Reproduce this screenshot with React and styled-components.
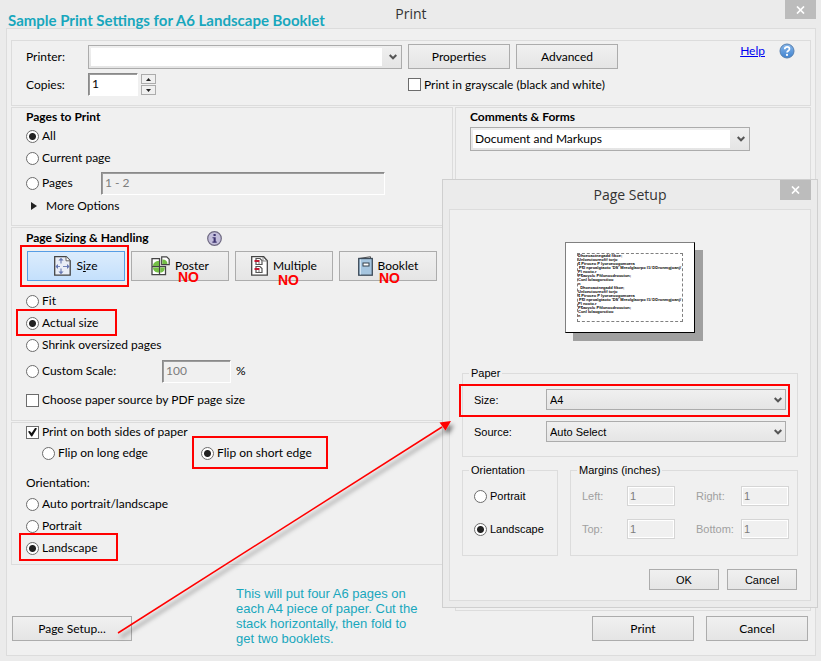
import React, { useId } from "react";
import styled, { createGlobalStyle, css } from "styled-components";

const RED = "#ff0000";
const LINE = "#dcdcdc";
const TEAL = "#18a7bd";
const UI = 'Lato, "Open Sans", sans-serif';
const DISPLAY = '"Open Sans", "Noto Sans", sans-serif';
const SANS = '"Liberation Sans", Arial, sans-serif';

const GlobalStyle = createGlobalStyle`
  *, *::before, *::after { box-sizing: border-box; }
  body { margin: 0; background: #ebebeb; color: #000; font: 12px/16px ${UI}; }
  button, input, select { font: inherit; color: inherit; margin: 0; }
`;

/* ---------- window chrome ---------- */
const PrintWindow = styled.div`
  position: relative;
  display: flex;
  flex-direction: column;
  min-height: 100vh;
  padding: 0 5px 5px 6px;
`;
const TitleBar = styled.header`
  display: grid;
  grid-template-columns: 31px 1fr 31px;
  height: ${(p) => p.$height}px;
  color: #333;
`;
const WindowTitle = styled.h1`
  grid-column: 2;
  margin: 0;
  font-family: ${DISPLAY};
  font-size: 14px;
  font-weight: 400;
  line-height: ${(p) => p.$line}px;
  text-align: center;
`;
const CloseButton = styled.button`
  display: grid;
  place-items: center;
  width: 31px;
  height: ${(p) => p.$height || 19}px;
  padding: 0;
  border: 0;
  background: #bcbcbc;
`;
const Client = styled.main`
  display: flex;
  flex: 1;
  flex-direction: column;
  padding: 11px 4px 14px;
  border: 1px solid ${LINE};
  background: #f0f0f0;
`;
const Panel = styled.section`
  padding: ${(p) => p.$pad || "0 14px"};
  border: 1px solid ${LINE};
`;
const Columns = styled.div`
  display: grid;
  flex: 1;
  grid-template-columns: minmax(0, 442fr) minmax(0, 356fr);
  gap: 2px;
  margin-top: 1px;
`;
const LeftColumn = styled.div`
  display: flex;
  flex-direction: column;
  gap: 1px;
`;
const CommentsPanel = styled(Panel)`
  display: flex;
  flex-direction: column;
  gap: 2px;
`;
const Footer = styled.footer`
  display: flex;
  gap: 12px;
  margin-top: 5px;
  padding: 0 3px 0 1px;
`;
const Spacer = styled.span`
  flex: 1;
`;

/* ---------- controls ---------- */
const PushButton = styled.button`
  width: ${(p) => p.$width}px;
  height: ${(p) => p.$height || 25}px;
  padding: 0;
  border: 1px solid #acacac;
  background: linear-gradient(#f0f0f0, #e5e5e5);
  text-align: center;
`;
const Heading = styled.h2`
  display: flex;
  align-items: center;
  gap: 58px;
  margin: 0;
  height: ${(p) => p.$height || 17}px;
  font-size: 12px;
  font-weight: 700;
`;
const Row = styled.div`
  display: flex;
  align-items: center;
  height: ${(p) => p.$height || 22}px;
  padding-left: ${(p) => p.$indent || 0}px;
`;
const ChoiceLabel = styled.label`
  position: relative;
  display: inline-flex;
  align-items: center;
  gap: 3px;
  height: 22px;
  white-space: nowrap;
`;
const Radio = styled.input.attrs({ type: "radio" })`
  appearance: none;
  flex: none;
  width: 13px;
  height: 13px;
  border: 1px solid #6c6c6c;
  border-radius: 50%;
  background: #fff;
  &:checked {
    background: radial-gradient(circle, #222 3px, #fff 4px);
  }
`;
const Check = styled.input.attrs({ type: "checkbox" })`
  appearance: none;
  display: grid;
  place-items: center;
  flex: none;
  width: 13px;
  height: 13px;
  border: 1px solid #6c6c6c;
  background: #fff;
  &:checked::before {
    content: "";
    width: 9px;
    height: 9px;
    background: #111;
    clip-path: polygon(0 45%, 20% 38%, 40% 62%, 80% 4%, 100% 12%, 46% 100%, 36% 100%);
  }
`;
const mark = css`
  &::after {
    content: "";
    position: absolute;
    inset: ${(p) => p.$mark};
    border: 2px solid ${RED};
    pointer-events: none;
  }
`;
const MarkedLabel = styled(ChoiceLabel)`
  ${mark}
`;
const SunkenInput = styled.input`
  width: ${(p) => p.$width};
  height: 23px;
  padding: 0 3px 2px;
  border: 1px solid;
  border-color: #8a8a8a #fff #fff #8a8a8a;
  box-shadow: inset 1px 1px 0 #9c9c9c;
  background: ${(p) => (p.disabled ? "#f0f0f0" : "#fff")};
  color: ${(p) => (p.disabled ? "#7d7d7d" : "#000")};
`;
const ComboFrame = styled.span`
  display: flex;
  align-items: center;
  width: ${(p) => p.$width || "100%"};
  height: 24px;
  padding: 2px;
  border: 1px solid #acacac;
  background: linear-gradient(#f0f0f0, #e5e5e5);
`;
const ComboSelect = styled.select`
  appearance: none;
  flex: 1;
  min-width: 0;
  height: 18px;
  padding: 0 2px;
  border: 0;
  background: #fff;
`;
const ChevronSlot = styled.span`
  display: flex;
  justify-content: flex-end;
  width: 17px;
  padding-right: 2px;
`;
const TextLink = styled.a`
  color: #0000f0;
`;

/* ---------- printer panel ---------- */
const PrinterGrid = styled.div`
  display: grid;
  grid-template-columns: 56px minmax(0, 314px) 102px 102px 1fr;
  align-items: center;
  gap: 4px 6px;
`;
const HelpGroup = styled.span`
  display: flex;
  justify-content: flex-end;
  align-items: center;
  gap: 14px;
  height: 25px;
  padding: 0 1px 11px 0;
`;
const Copies = styled.span`
  display: flex;
  align-items: center;
  gap: 3px;
`;
const Spinner = styled.span`
  display: grid;
  gap: 1px;
`;
const SpinButton = styled.button`
  display: grid;
  place-items: center;
  width: 15px;
  height: 10px;
  padding: 0;
  border: 1px solid #acacac;
  background: #f0f0f0;
`;
const GrayscaleCell = styled.span`
  grid-column: span 3;
`;

/* ---------- page sizing ---------- */
const ModeBar = styled.div`
  display: grid;
  grid-template-columns: repeat(4, minmax(0, 98px));
  gap: 6px;
  padding: 3px 0 9px 1px;
`;
const ModeButton = styled.button`
  position: relative;
  display: flex;
  align-items: center;
  justify-content: center;
  gap: 5px;
  height: 30px;
  padding: 0;
  border: 1px solid ${(p) => (p.$active ? "#569de5" : "#acacac")};
  background: ${(p) => (p.$active ? "linear-gradient(#dcecfc, #c4e0fc)" : "linear-gradient(#f0f0f0, #e5e5e5)")};
  ${(p) => p.$mark && mark}
`;
const No = styled.strong`
  position: absolute;
  top: ${(p) => p.$top}px;
  left: ${(p) => p.$left}px;
  color: ${RED};
  font: 700 14px/16px ${SANS};
`;
const MoreOptions = styled.button`
  display: flex;
  align-items: center;
  gap: 9px;
  height: 18px;
  padding: 0 0 0 5px;
  border: 0;
  background: none;
`;
const RowLabel = styled.span`
  width: ${(p) => p.$width}px;
`;
const Unit = styled.span`
  margin-left: 5px;
`;

/* ---------- page setup dialog ---------- */
const Dialog = styled.div`
  position: absolute;
  top: 179px;
  left: 442px;
  right: 3px;
  padding: 0 6px 6px;
  border: 1px solid #cfcfcf;
  background: #ebebeb;
`;
const DialogBody = styled.div`
  padding: 32px 12px 10px;
  border: 1px solid ${LINE};
  background: #f0f0f0;
  font-family: ${SANS};
  font-size: 11px;
`;
const Preview = styled.div`
  width: 130px;
  height: 91px;
  margin: 0 auto 32px 103px;
  padding: 10px 11px;
  border: 1px solid #000;
  border-top-color: #808080;
  border-left-color: #808080;
  background: #fff;
  box-shadow: 8px 8px 0 #a0a0a0;
`;
const PreviewText = styled.pre`
  height: 69px;
  margin: 0;
  border: 1px dashed #808080;
  font: 700 4px/4px ${SANS};
`;
const Group = styled.fieldset`
  min-width: 0;
  margin: 0;
  padding: ${(p) => p.$pad};
  border: 1px solid ${LINE};
`;
const Legend = styled.legend`
  margin-left: -5px;
  padding: 0 2px;
  line-height: 16px;
`;
const Groups = styled.div`
  display: grid;
  grid-template-columns: 96px 1fr;
  gap: 12px;
  margin-top: 5px;
`;
const PaperRow = styled.div`
  position: relative;
  display: grid;
  grid-template-columns: 72px 1fr;
  align-items: center;
  height: 21px;
  margin-bottom: 11px;
  ${(p) => p.$mark && mark}
`;
const FlatCombo = styled.span`
  display: grid;
  grid-template-columns: 1fr 16px;
  align-items: center;
`;
const FlatSelect = styled.select`
  appearance: none;
  grid-area: 1 / 1 / 2 / 3;
  height: 21px;
  padding: 0 3px;
  border: 1px solid #acacac;
  background: linear-gradient(#f0f0f0, #e5e5e5);
`;
const FlatArrow = styled.span`
  display: grid;
  grid-area: 1 / 2;
  place-items: center;
  pointer-events: none;
`;
const MarginGrid = styled.div`
  display: grid;
  grid-template-columns: 45px 48px 66px 48px;
  row-gap: 13px;
  align-items: center;
  color: #a0a0a0;
  & > label:nth-of-type(even) {
    padding-left: 21px;
  }
`;
const MarginInput = styled.input`
  width: 100%;
  height: 20px;
  padding: 0 2px;
  border: 1px solid #d5d5d5;
  outline: 1px solid #fff;
  outline-offset: -2px;
  background: #f0f0f0;
  color: #7d7d7d;
`;
const DialogActions = styled.div`
  display: flex;
  justify-content: flex-end;
  gap: 8px;
  margin-top: 13px;
  padding-right: 1px;
`;

/* ---------- annotations ---------- */
const Banner = styled.p`
  position: absolute;
  top: 11px;
  left: 8px;
  margin: 0;
  color: ${TEAL};
  font: 700 15px/18px ${UI};
  white-space: nowrap;
`;
const Note = styled.p`
  position: absolute;
  top: 586px;
  left: 236px;
  width: 190px;
  margin: 0;
  color: ${TEAL};
  font: 13px/15px ${SANS};
  white-space: pre;
`;
const ArrowLayer = styled.svg`
  position: absolute;
  top: 410px;
  left: 110px;
  pointer-events: none;
`;

/* ---------- drawings ---------- */
const Cross = () => (
  <svg width="9" height="8" viewBox="0 0 9 8" aria-hidden="true">
    <path d="M1 .5l7 7M8 .5l-7 7" stroke="#fff" strokeWidth="1.7" />
  </svg>
);
const Chevron = () => (
  <svg width="8" height="6" viewBox="0 0 8 6" aria-hidden="true">
    <path d="M.7 1L4 4.300 7.300 1" fill="none" stroke="#555" strokeWidth="2" />
  </svg>
);
const Triangle = ({ d, w, h }) => (
  <svg width={w} height={h} viewBox={`0 0 ${w} ${h}`} aria-hidden="true">
    <path d={d} fill="#222" />
  </svg>
);
const HelpIcon = () => (
  <svg width="16" height="16" viewBox="0 0 16 16" aria-hidden="true">
    <defs>
      <linearGradient id="helpFill" x1="0" y1="0" x2="0" y2="1">
        <stop offset="0" stopColor="#86b6ea" />
        <stop offset="1" stopColor="#3f82cf" />
      </linearGradient>
    </defs>
    <circle cx="8" cy="8" r="7" fill="url(#helpFill)" stroke="#5680b0" />
    <path d="M5.700 6.200c0-3.200 4.800-3 4.800-.2C10.500 7.700 8 7.700 8 9.600" fill="none" stroke="#fff" strokeWidth="1.700" />
    <circle cx="8" cy="11.900" r="1.100" fill="#fff" />
  </svg>
);
const InfoIcon = () => (
  <svg width="15" height="15" viewBox="0 0 15 15" role="img" aria-label="Information">
    <circle cx="7.500" cy="7.500" r="6.800" fill="#c3bedb" stroke="#6d6880" strokeWidth="1.200" />
    <rect x="6.500" y="3" width="2.200" height="2" fill="#3e3470" />
    <path d="M5.500 6.200h3.200v4.300h1v1.200H5.400v-1.200h1.200V7.300H5.500z" fill="#3e3470" />
  </svg>
);
const SizeIcon = () => (
  <svg width="17" height="20" viewBox="0 0 17 20" aria-hidden="true">
    <path d="M.7.7h11.500l4 4v14.500H.7z" fill="#e9eef6" stroke="#444" strokeWidth="1.300" />
    <path d="M12 .8v4h4" fill="#fff" stroke="#666" />
    <path d="M7 4v3.500M7 12.500v4M3 10.500h3M9 10.500h5" stroke="#7485b8" strokeWidth="1.200" />
    <path d="M7 1.800l2.600 2.700H4.400zM7 18.200L4.400 15.500h5.200zM1.400 10.500L4 8v5zM15.600 10.500L13 8v5z" fill="#6678b4" />
  </svg>
);
const PosterIcon = () => (
  <svg width="19" height="20" viewBox="0 0 19 20" aria-hidden="true">
    <path d="M1 2.700h7.500v8H1zM1 10.700h7.500v8H1zM8.500 10.700h6v8h-6z" fill="#fff" stroke="#444" strokeWidth="1.300" />
    <path d="M2 10c0-3 2.500-5 6-5v5zM2 11.400h6v5.200c-3.500 0-6-2-6-5.200zM9.200 11.400h4.600c0 3-1.600 5.200-4.600 5.200z" fill="#73bf45" />
    <path d="M10.700.8h5l2.500 2.500v5.400h-7.500z" fill="#fff" stroke="#444" strokeWidth="1.200" />
    <path d="M11.400 3.500c3.500 0 5 1.600 5 4.600h-5z" fill="#73bf45" />
  </svg>
);
const MultipleIcon = () => (
  <svg width="17" height="20" viewBox="0 0 17 20" aria-hidden="true">
    <path d="M.7.7h12l3.600 4v14.500H.7z" fill="#fff" stroke="#444" strokeWidth="1.300" />
    <path d="M12 1v4h4" fill="none" stroke="#888" />
    <path d="M5 2.500h4l2 2v4H5zM5 10.500h4l2 2v4H5z" fill="#fff" stroke="#555" strokeWidth="1.200" />
    <path d="M3.500 5h5M3.500 13h5" stroke="#c01830" strokeWidth="2" />
    <path d="M7 7h2M7 15h2" stroke="#777" />
  </svg>
);
const BookletIcon = () => (
  <svg width="15" height="20" viewBox="0 0 15 20" aria-hidden="true">
    <path d="M1 2.500L12.500.7v2.500" fill="#ddd" stroke="#555" />
    <rect x=".7" y="2.500" width="13.600" height="16.700" fill="#a5c5df" stroke="#3e4c5a" strokeWidth="1.300" />
    <path d="M2.500 3.500v15" stroke="#d3e5f3" />
    <rect x="5" y="7" width="6" height="3" fill="#fff" stroke="#33404c" />
  </svg>
);

/* ---------- composed parts ---------- */
function Choice({ name, mark: inset, children, ...rest }) {
  const Wrapper = inset ? MarkedLabel : ChoiceLabel;
  return (
    <Wrapper $mark={inset}>
      <Radio name={name} {...rest} />
      {children}
    </Wrapper>
  );
}
function Combo({ id, label, options, width }) {
  return (
    <ComboFrame $width={width}>
      <ComboSelect id={id} aria-label={label}>
        {options.map((o) => (
          <option key={o}>{o}</option>
        ))}
      </ComboSelect>
      <ChevronSlot>
        <Chevron />
      </ChevronSlot>
    </ComboFrame>
  );
}
function PaperField({ label, value, inset }) {
  const id = useId();
  return (
    <PaperRow $mark={inset}>
      <label htmlFor={id}>{label}</label>
      <FlatCombo>
        <FlatSelect id={id}>
          <option>{value}</option>
        </FlatSelect>
        <FlatArrow>
          <Chevron />
        </FlatArrow>
      </FlatCombo>
    </PaperRow>
  );
}
function MarginField({ label }) {
  const id = useId();
  return (
    <>
      <label htmlFor={id}>{label}</label>
      <MarginInput id={id} defaultValue="1" disabled />
    </>
  );
}

const previewBlock = `Dhoeoactnegadd fikoe;
Unloectoureofif torjo
$ Ptroceo P lyoroeoogomoera
 P$I nproalgtaoto 'DS' Mreolglaorpo I1/ DDronmgjoanj/
Pl nooto.r
P$aoyclc Pftlonocdroocton;
Conl Iolaogorctioo
n`;

function PageSetup() {
  return (
    <Dialog role="dialog" aria-label="Page Setup">
      <TitleBar $height={29}>
        <WindowTitle as="h2" $line={30}>Page Setup</WindowTitle>
        <CloseButton $height={20} aria-label="Close Page Setup">
          <Cross />
        </CloseButton>
      </TitleBar>
      <DialogBody>
        <Preview>
          <PreviewText>{`${previewBlock}\n  ${previewBlock}`}</PreviewText>
        </Preview>
        <Group $pad="8px 11px 3px">
          <Legend>Paper</Legend>
          <PaperField label="Size:" value="A4" inset="-5px -4px -7px -15px" />
          <PaperField label="Source:" value="Auto Select" />
        </Group>
        <Groups>
          <Group $pad="7px 11px 4px">
            <Legend>Orientation</Legend>
            <Row>
              <Choice name="setup-orientation">Portrait</Choice>
            </Row>
            <Row $height={44}>
              <Choice name="setup-orientation" defaultChecked>Landscape</Choice>
            </Row>
          </Group>
          <Group $pad="8px 8px 4px 11px">
            <Legend>Margins (inches)</Legend>
            <MarginGrid>
              <MarginField label="Left:" />
              <MarginField label="Right:" />
              <MarginField label="Top:" />
              <MarginField label="Bottom:" />
            </MarginGrid>
          </Group>
        </Groups>
        <DialogActions>
          <PushButton $width={70} $height={21}>OK</PushButton>
          <PushButton $width={70} $height={21}>Cancel</PushButton>
        </DialogActions>
      </DialogBody>
    </Dialog>
  );
}

export default function App() {
  return (
    <PrintWindow>
      <GlobalStyle />
      <TitleBar $height={28}>
        <WindowTitle $line={28}>Print</WindowTitle>
        <CloseButton aria-label="Close">
          <Cross />
        </CloseButton>
      </TitleBar>
      <Client>
        <Panel $pad="3px 14px 9px">
          <PrinterGrid>
            <label htmlFor="printer">Printer:</label>
            <Combo id="printer" options={[""]} />
            <PushButton $width={102}>Properties</PushButton>
            <PushButton $width={102}>Advanced</PushButton>
            <HelpGroup>
              <TextLink href="#help">Help</TextLink>
              <HelpIcon />
            </HelpGroup>
            <label htmlFor="copies">Copies:</label>
            <Copies>
              <SunkenInput id="copies" $width="50px" defaultValue="1" />
              <Spinner>
                <SpinButton aria-label="More copies">
                  <Triangle w={5} h={3} d="M0 3L2.500 0 5 3z" />
                </SpinButton>
                <SpinButton aria-label="Fewer copies">
                  <Triangle w={5} h={3} d="M0 0h5L2.500 3z" />
                </SpinButton>
              </Spinner>
            </Copies>
            <GrayscaleCell>
              <ChoiceLabel>
                <Check />
                Print in grayscale (black and white)
              </ChoiceLabel>
            </GrayscaleCell>
          </PrinterGrid>
        </Panel>
        <Columns>
          <LeftColumn>
            <Panel $pad="0 14px 10px">
              <Heading>Pages to Print</Heading>
              <Row>
                <Choice name="range" defaultChecked>All</Choice>
              </Row>
              <Row>
                <Choice name="range">Current page</Choice>
              </Row>
              <Row $height={28}>
                <RowLabel $width={75}>
                  <Choice name="range">Pages</Choice>
                </RowLabel>
                <SunkenInput aria-label="Page range" $width="284px" defaultValue="1 - 2" disabled />
              </Row>
              <MoreOptions>
                <Triangle w={6} h={8} d="M0 0l6 4-6 4z" />
                More Options
              </MoreOptions>
            </Panel>
            <Panel $pad="0 14px 6px">
              <Heading $height={20}>
                Page Sizing &amp; Handling
                <InfoIcon />
              </Heading>
              <ModeBar>
                <ModeButton $active $mark="-7px -5px -7px -8px">
                  <SizeIcon />
                  <span>S<u>i</u>ze</span>
                </ModeButton>
                <ModeButton>
                  <PosterIcon />
                  Poster
                  <No $top={17} $left={46}>NO</No>
                </ModeButton>
                <ModeButton>
                  <MultipleIcon />
                  Multiple
                  <No $top={20} $left={42}>NO</No>
                </ModeButton>
                <ModeButton>
                  <BookletIcon />
                  Booklet
                  <No $top={18} $left={39}>NO</No>
                </ModeButton>
              </ModeBar>
              <Row>
                <Choice name="scale">Fit</Choice>
              </Row>
              <Row>
                <Choice name="scale" defaultChecked mark="-3px -19px -2px -10px">Actual size</Choice>
              </Row>
              <Row>
                <Choice name="scale">Shrink oversized pages</Choice>
              </Row>
              <Row $height={30}>
                <RowLabel $width={136}>
                  <Choice name="scale">Custom Scale:</Choice>
                </RowLabel>
                <SunkenInput aria-label="Scale percent" $width="69px" defaultValue="100" disabled />
                <Unit>%</Unit>
              </Row>
              <Row $height={28}>
                <ChoiceLabel>
                  <Check />
                  Choose paper source by PDF page size
                </ChoiceLabel>
              </Row>
            </Panel>
            <Panel $pad="0 14px 5px">
              <Row $height={18}>
                <ChoiceLabel>
                  <Check defaultChecked />
                  Print on both sides of paper
                </ChoiceLabel>
              </Row>
              <Row $height={24} $indent={16}>
                <RowLabel $width={159}>
                  <Choice name="flip">Flip on long edge</Choice>
                </RowLabel>
                <Choice name="flip" defaultChecked mark="-6px -16px -5px -9px">Flip on short edge</Choice>
              </Row>
              <Row $height={8} />
              <Row $height={20}>Orientation:</Row>
              <Row>
                <Choice name="orientation">Auto portrait/landscape</Choice>
              </Row>
              <Row>
                <Choice name="orientation">Portrait</Choice>
              </Row>
              <Row>
                <Choice name="orientation" defaultChecked mark="-4px -20px -2px -7px">Landscape</Choice>
              </Row>
            </Panel>
          </LeftColumn>
          <CommentsPanel>
            <Heading>Comments &amp; Forms</Heading>
            <Combo label="Comments and forms" width="280px" options={["Document and Markups"]} />
          </CommentsPanel>
        </Columns>
        <Footer>
          <PushButton $width={120}>Page Setup...</PushButton>
          <Spacer />
          <PushButton $width={102}>Print</PushButton>
          <PushButton $width={102}>Cancel</PushButton>
        </Footer>
      </Client>
      <Banner>Sample Print Settings for A6 Landscape Booklet</Banner>
      <Note>{"This will put four A6 pages on\neach A4 piece of paper. Cut the\nstack horizontally, then fold to\nget two booklets."}</Note>
      <PageSetup />
      <ArrowLayer width="350" height="235" viewBox="0 0 350 235" aria-hidden="true">
        <defs>
          <filter id="soft" x="-10%" y="-10%" width="120%" height="120%">
            <feDropShadow dx="3" dy="4" stdDeviation="2" floodColor="#000" floodOpacity="0.5" />
          </filter>
        </defs>
        <g filter="url(#soft)">
          <path d="M8 223L332 17" stroke={RED} strokeWidth="1.500" />
          <path d="M341 11L335.500 20.500 329.500 12.500z" fill={RED} />
        </g>
      </ArrowLayer>
    </PrintWindow>
  );
}
